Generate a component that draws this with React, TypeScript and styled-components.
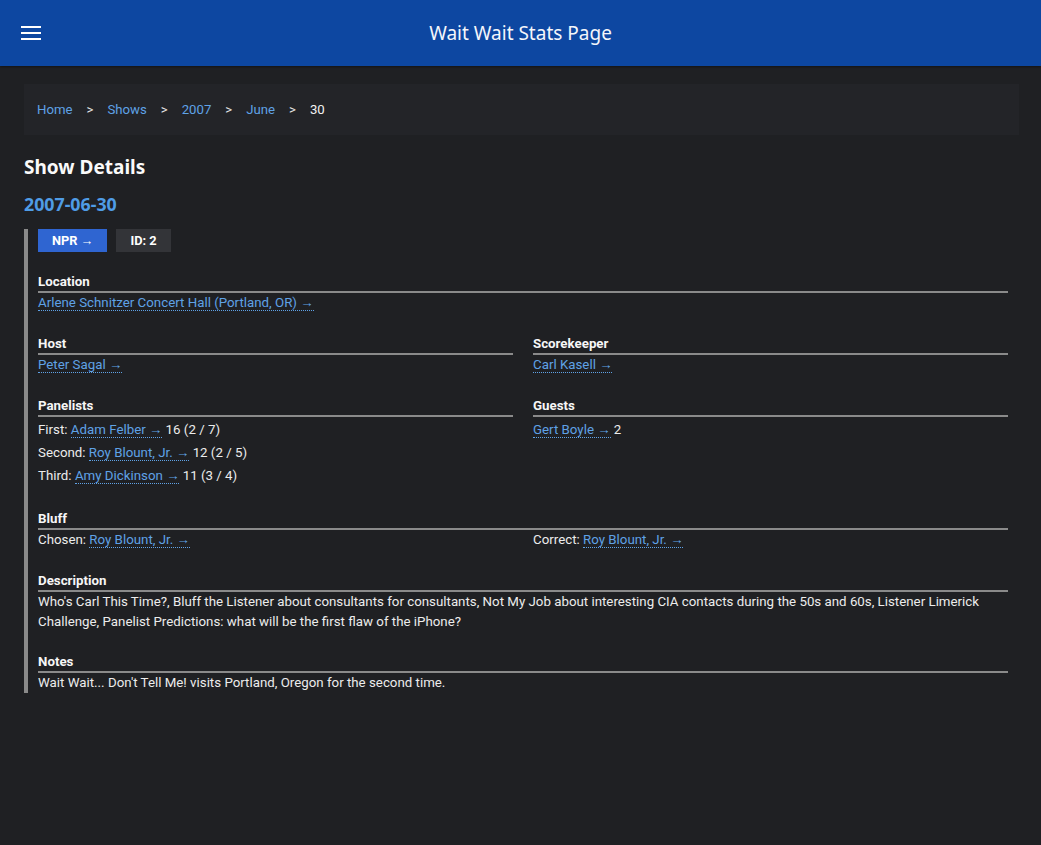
import React from "react";
import styled, { createGlobalStyle } from "styled-components";

const Global = createGlobalStyle`
  html, body { margin: 0; padding: 0; background: #1f2023; }
  body { font-family: Roboto, "Noto Sans", "Liberation Sans", sans-serif; color: #ececec; }
  * { box-sizing: border-box; }
`;

const Header = styled.header`
  height: 66px;
  background: #0d47a1;
  display: flex;
  align-items: center;
  box-shadow: 0 1px 2px rgba(0,0,0,0.4);
`;

const Burger = styled.button`
  background: none;
  border: none;
  padding: 0;
  margin-left: 21px;
  width: 20px;
  height: 14px;
  display: flex;
  flex-direction: column;
  justify-content: space-between;
  cursor: pointer;
  span { display: block; height: 2px; background: #fff; }
`;

const Title = styled.h1`
  flex: 1;
  margin: 0 0 0 -41px;
  text-align: center;
  font-family: "Noto Sans", sans-serif;
  font-size: 19px;
  font-weight: 400;
  color: #f4f6fb;
`;

const Main = styled.main`
  padding: 18px 22px 40px 24px;
`;

const Crumbs = styled.nav`
  background: #232428;
  height: 51px;
  display: flex;
  align-items: center;
  padding: 0 13px;
  font-size: 13.2px;
  gap: 14px;
`;

const CrumbLink = styled.a`
  color: #5fa2e6;
  text-decoration: none;
`;

const Sep = styled.span`
  color: #e6e6e6;
`;

const Current = styled.span`
  color: #f2f2f2;
`;

const H2 = styled.h2`
  margin: 19px 0 0;
  font-family: "Noto Sans", sans-serif;
  font-size: 19px;
  font-weight: 700;
  color: #fafafa;
`;

const DateHeading = styled.h3`
  margin: 12px 0 0;
  font-family: "Noto Sans", sans-serif;
  font-size: 17.8px;
  font-weight: 700;
  color: #4f9ce6;
`;

const Block = styled.div`
  margin-top: 14px;
  border-left: 4px solid #8a8a8a;
  padding: 0 10px 0 10px;
  margin-right: 1px;
`;

const Badges = styled.div`
  display: flex;
  gap: 9px;
  margin-top: -1px;
`;

const Badge = styled.span<{ $primary?: boolean }>`
  display: inline-block;
  height: 23px;
  line-height: 23px;
  padding: 0 14px;
  font-size: 12.8px;
  font-weight: 700;
  color: #fff;
  background: ${(p) => (p.$primary ? "#2f65d1" : "#333438")};
`;

const Section = styled.section<{ $gap?: number }>`
  margin-top: ${(p) => p.$gap ?? 22}px;
`;

const Row = styled.div<{ $gap?: number }>`
  display: grid;
  grid-template-columns: 1fr 1fr;
  column-gap: 20px;
  margin-top: ${(p) => p.$gap ?? 22}px;
`;

const Label = styled.div`
  font-size: 13.3px;
  font-weight: 700;
  color: #f6f6f6;
  line-height: 18px;
  border-bottom: 2px solid #8a8a8a;
`;

const Content = styled.div`
  font-size: 13.3px;
  line-height: 20px;
  color: #ececec;
`;

const Lines = styled.div`
  font-size: 13.3px;
  line-height: 23px;
  padding: 1px 0 1px;
  color: #ececec;
`;

const Link = styled.a`
  color: #5fa2e6;
  text-decoration: none;
  border-bottom: 1px dotted #5fa2e6;
`;

const Text = styled.div`
  font-size: 13.3px;
  line-height: 19.5px;
  color: #ececec;
`;

const arrow = "\u2192";

export default function App() {
  return (
    <>
      <Global />
      <Header>
        <Burger aria-label="menu">
          <span />
          <span />
          <span />
        </Burger>
        <Title>Wait Wait Stats Page</Title>
      </Header>
      <Main>
        <Crumbs>
          <CrumbLink href="#">Home</CrumbLink>
          <Sep>&gt;</Sep>
          <CrumbLink href="#">Shows</CrumbLink>
          <Sep>&gt;</Sep>
          <CrumbLink href="#">2007</CrumbLink>
          <Sep>&gt;</Sep>
          <CrumbLink href="#">June</CrumbLink>
          <Sep>&gt;</Sep>
          <Current>30</Current>
        </Crumbs>
        <H2>Show Details</H2>
        <DateHeading>2007-06-30</DateHeading>
        <Block>
          <Badges>
            <Badge $primary>NPR {arrow}</Badge>
            <Badge>ID: 2</Badge>
          </Badges>
          <Section $gap={21}>
            <Label>Location</Label>
            <Content>
              <Link href="#">Arlene Schnitzer Concert Hall (Portland, OR) {arrow}</Link>
            </Content>
          </Section>
          <Row>
            <div>
              <Label>Host</Label>
              <Content>
                <Link href="#">Peter Sagal {arrow}</Link>
              </Content>
            </div>
            <div>
              <Label>Scorekeeper</Label>
              <Content>
                <Link href="#">Carl Kasell {arrow}</Link>
              </Content>
            </div>
          </Row>
          <Row>
            <div>
              <Label>Panelists</Label>
              <Lines>
                First: <Link href="#">Adam Felber {arrow}</Link> 16 (2 / 7)
                <br />
                Second: <Link href="#">Roy Blount, Jr. {arrow}</Link> 12 (2 / 5)
                <br />
                Third: <Link href="#">Amy Dickinson {arrow}</Link> 11 (3 / 4)
              </Lines>
            </div>
            <div>
              <Label>Guests</Label>
              <Lines>
                <Link href="#">Gert Boyle {arrow}</Link> 2
              </Lines>
            </div>
          </Row>
          <Section $gap={22}>
            <Label>Bluff</Label>
            <Row $gap={0}>
              <Content>
                Chosen: <Link href="#">Roy Blount, Jr. {arrow}</Link>
              </Content>
              <Content>
                Correct: <Link href="#">Roy Blount, Jr. {arrow}</Link>
              </Content>
            </Row>
          </Section>
          <Section $gap={22}>
            <Label>Description</Label>
            <Text>
              Who's Carl This Time?, Bluff the Listener about consultants for consultants, Not My Job about
              interesting CIA contacts during the 50s and 60s, Listener Limerick Challenge, Panelist
              Predictions: what will be the first flaw of the iPhone?
            </Text>
          </Section>
          <Section $gap={22}>
            <Label>Notes</Label>
            <Text>Wait Wait... Don't Tell Me! visits Portland, Oregon for the second time.</Text>
          </Section>
        </Block>
      </Main>
    </>
  );
}
